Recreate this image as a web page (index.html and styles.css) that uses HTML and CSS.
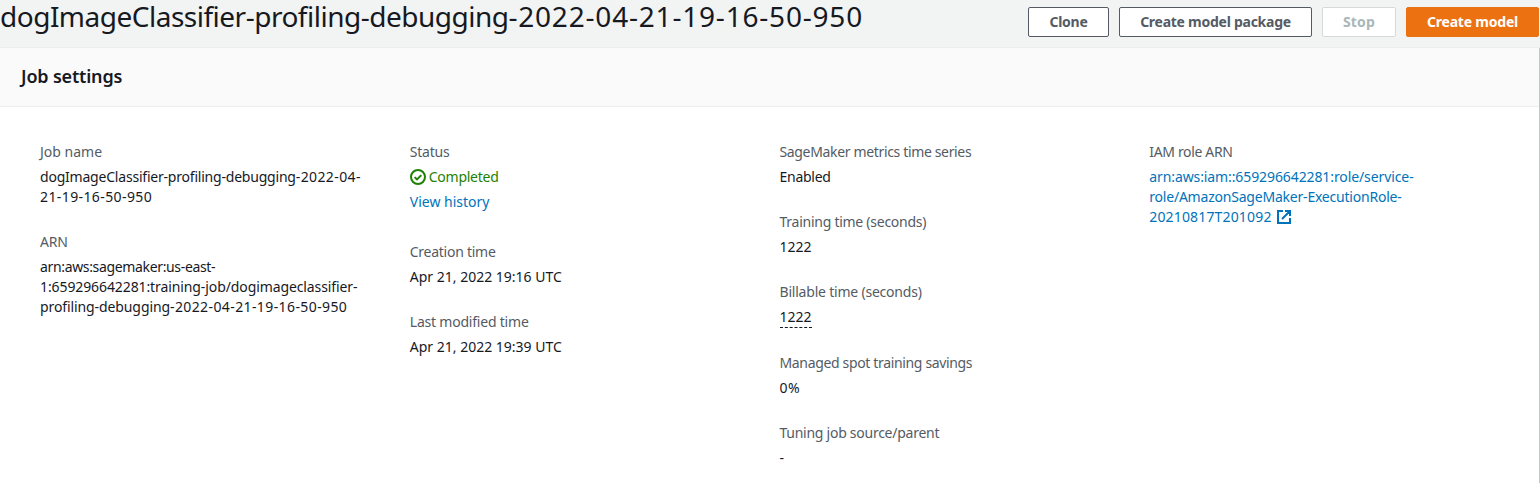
FILE: index.html
```
<!DOCTYPE html>
<html lang="en">
<head>
<meta charset="utf-8">
<title>Training job</title>
<link rel="stylesheet" href="styles.css">
</head>
<body>
<header class="page-header">
  <h1 class="page-title"><span class="title-name">dogImageClassifier-profiling-debugging</span><span class="title-date">-2022-04-21-19-16-50-950</span></h1>
  <div class="actions">
    <button class="btn btn-clone tight-3">Clone</button>
    <button class="btn btn-package tight-3">Create model package</button>
    <button class="btn btn-stop btn-disabled loose-1" disabled>Stop</button>
    <button class="btn btn-create btn-primary tight-2">Create model</button>
  </div>
</header>
<main class="panel">
  <div class="panel-header"><h2 class="panel-title">Job settings</h2></div>
  <div class="columns">
    <dl class="column">
      <div class="field">
        <dt class="label">Job name</dt>
        <dd class="value"><span class="line tight-2">dogImageClassifier-profiling-debugging<span class="loose-2">-2022-04-</span></span><span class="line loose-2">21-19-16-50-950</span></dd>
      </div>
      <div class="field">
        <dt class="label tight-3">ARN</dt>
        <dd class="value"><span class="line tight-4">arn:aws:sagemaker:us-east-</span><span class="line tight-1">1:659296642281:training-job/dogimageclassifier-</span><span class="line tight-1">profiling-debugging<span class="loose-2">-2022-04-21-19-16-50-950</span></span></dd>
      </div>
    </dl>
    <dl class="column">
      <div class="field field-status">
        <dt class="label tight-2">Status</dt>
        <dd class="value status tight-3">
          <svg class="status-icon" viewBox="0 0 16 16"><circle cx="8" cy="8" r="7"/><path d="M4.6 8.1l2.4 2.3 4.3-4.3"/></svg>
          <span>Completed</span>
        </dd>
        <dd class="value"><a class="link">View history</a></dd>
      </div>
      <div class="field">
        <dt class="label tight-3">Creation time</dt>
        <dd class="value">Apr 21, 2022 19:16 UTC</dd>
      </div>
      <div class="field">
        <dt class="label tight-2">Last modified time</dt>
        <dd class="value">Apr 21, 2022 19:39 UTC</dd>
      </div>
    </dl>
    <dl class="column">
      <div class="field">
        <dt class="label tight-4">SageMaker metrics time series</dt>
        <dd class="value tight-3">Enabled</dd>
      </div>
      <div class="field">
        <dt class="label tight-3">Training time (seconds)</dt>
        <dd class="value">1222</dd>
      </div>
      <div class="field">
        <dt class="label tight-2">Billable time (seconds)</dt>
        <dd class="value"><span class="hint">1222</span></dd>
      </div>
      <div class="field">
        <dt class="label tight-4">Managed spot training savings</dt>
        <dd class="value loose-2">0%</dd>
      </div>
      <div class="field">
        <dt class="label tight-3">Tuning job source/parent</dt>
        <dd class="value">-</dd>
      </div>
    </dl>
    <dl class="column">
      <div class="field">
        <dt class="label tight-4">IAM role ARN</dt>
        <dd class="value"><a class="link"><span class="line tight-1">arn:aws:iam::659296642281:role/service-</span><span class="line tight-2">role/AmazonSageMaker-ExecutionRole-</span><span class="line line-icon loose-1">20210817T201092<svg class="external-icon" viewBox="0 0 14 14"><path d="M6 1H1v12h12V8M8 1h5v5M13 1L5 9"/></svg></span></a></dd>
      </div>
    </dl>
  </div>
</main>
</body>
</html>
```
FILE: styles.css
```
* { box-sizing: border-box; }

body {
  margin: 0;
  height: 483px;
  display: flex;
  flex-direction: column;
  overflow: hidden;
  background: #fff;
  color: #16191f;
  font: 14px/20px "Noto Sans", sans-serif;
}

h1, h2, dl, dd { margin: 0; }

.page-header {
  display: flex;
  flex: none;
  justify-content: space-between;
  align-items: flex-start;
  height: 48px;
  padding-right: 1px;
  background: #f2f3f3;
  border-bottom: 1px solid #eaeded;
}

.page-title {
  font-size: 28px;
  line-height: 32px;
  font-weight: 400;
  white-space: nowrap;
}

.title-name { letter-spacing: -0.5px; }
.title-date { letter-spacing: 0.8px; }

.actions {
  display: flex;
  gap: 10px;
  padding-top: 7px;
}

.btn {
  height: 30px;
  padding: 0;
  border: 1px solid #545b64;
  border-radius: 2px;
  background: #fff;
  color: #545b64;
  font-family: inherit;
  font-size: 14px;
  line-height: 20px;
  font-weight: 700;
  white-space: nowrap;
}

.btn-clone { width: 81px; }
.btn-package { width: 193px; }
.btn-stop { width: 74px; }
.btn-create { width: 133px; }

.btn-disabled { border-color: #d5dbdb; color: #aab7b8; }
.btn-primary { border-color: #ec7211; background: #ec7211; color: #fff; }

.panel {
  flex: 1;
  border-right: 1px solid #c4c6c6;
}

.panel-header {
  height: 59px;
  padding: 17px 20px;
  background: #fafafa;
  border-bottom: 1px solid #eaeded;
}

.panel-title {
  padding-left: 1px;
  font-size: 18px;
  line-height: 22px;
  font-weight: 600;
  letter-spacing: -0.18px;
}

.columns {
  display: grid;
  grid-template-columns: repeat(4, 369.75px);
  padding: 35px 0 0 40px;
}

.column {
  display: flex;
  flex-direction: column;
  gap: 25px;
}

.field-status { padding-bottom: 5px; }

.label { color: #545b64; }
.value { margin-top: 5px; }
.line { display: block; white-space: nowrap; }
.link { color: #0073bb; }

.status {
  display: flex;
  align-items: center;
  gap: 3px;
  color: #1d8102;
}

.status-icon {
  width: 16px;
  height: 16px;
  fill: none;
  stroke: #1d8102;
  stroke-width: 2;
}

.hint {
  display: inline-block;
  height: 21px;
  vertical-align: top;
  border-bottom: 1px dashed #16191f;
}

.value:has(.hint) { height: 21px; }

.line-icon {
  display: flex;
  align-items: center;
  gap: 5px;
}

.external-icon {
  width: 14px;
  height: 14px;
  fill: none;
  stroke: #0073bb;
  stroke-width: 2;
}

/* Tracking steps */
.tight-1 { letter-spacing: -0.1px; }
.tight-2 { letter-spacing: -0.21px; }
.tight-3 { letter-spacing: -0.26px; }
.tight-4 { letter-spacing: -0.345px; }
.loose-1 { letter-spacing: 0.16px; }
.loose-2 { letter-spacing: 0.4px; }
```
